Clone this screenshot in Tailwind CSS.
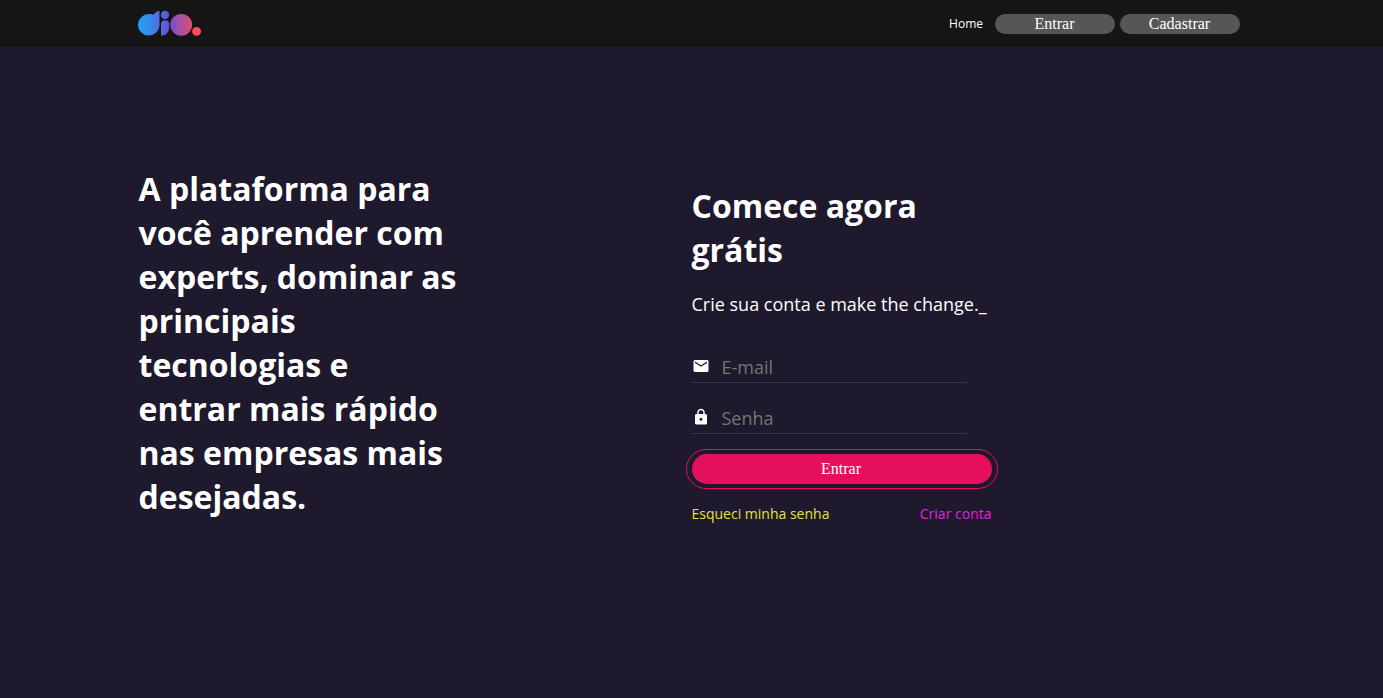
<!DOCTYPE html>
<html lang="pt-BR">
<head>
<meta charset="utf-8">
<title>DIO</title>
<script src="https://cdn.jsdelivr.net/npm/@tailwindcss/browser@4"></script>
</head>
<body class="bg-[#1e192c] text-white font-['Open_Sans',sans-serif] h-screen overflow-hidden">
<header class="h-[47px] bg-[#151515]">
  <div class="w-[1107px] ml-[138px] h-full flex items-center justify-between">
    <svg class="w-16 h-[26px] -mt-px" viewBox="0 -0.6 64 26">
      <defs>
        <linearGradient id="d" gradientUnits="userSpaceOnUse" x1="0" y1="0" x2="32" y2="0"><stop offset="0" stop-color="#1ba8f5"/><stop offset="1" stop-color="#6a4fd6"/></linearGradient>
        <linearGradient id="o" gradientUnits="userSpaceOnUse" x1="32" y1="0" x2="54" y2="0"><stop offset="0" stop-color="#7350d4"/><stop offset="1" stop-color="#e04e70"/></linearGradient>
      </defs>
      <path fill="url(#d)" d="M10.700 3.500C13 3.500 14.200 4 15.500 4C17.200 3 17.500.5 21.500.5V15A10.750 10.750 0 1 1 10.700 3.500Z"/>
      <circle fill="url(#d)" cx="27" cy="4.300" r="4.200"/>
      <path fill="url(#d)" d="M23 25.200V13a4.200 4.200 0 0 1 8.200 0V16.500C31.200 21.500 28 25.200 23 25.200Z"/>
      <circle fill="url(#o)" cx="43.200" cy="14.200" r="10.900"/>
      <circle fill="#ff4b5c" cx="58.600" cy="20.700" r="4.400"/>
    </svg>
    <nav class="flex items-center">
      <a class="text-xs mr-3">Home</a>
      <button class="w-[120px] h-5 rounded-full bg-[#565656] font-['Liberation_Serif',serif] text-base leading-5 mr-[5px] pr-px">Entrar</button>
      <button class="w-[120px] h-5 rounded-full bg-[#565656] font-['Liberation_Serif',serif] text-base leading-5 mr-[5px] pr-px">Cadastrar</button>
    </nav>
  </div>
</header>
<main class="flex pl-[138.500px] pt-[120px]">
  <h1 class="w-[320px] mr-[233px] text-[32px] leading-[44px] font-bold">A plataforma para você aprender com experts, dominar as principais tecnologias e entrar mais rápido nas empresas mais desejadas.</h1>
  <section class="w-[300px] pt-[17px]">
    <h2 class="w-[260px] text-[32px] leading-[44px] font-bold">Comece agora grátis</h2>
    <p class="mt-5 text-lg leading-[25px] whitespace-nowrap">Crie sua conta e make the change._</p>
    <form class="mt-[35px]">
      <label class="flex w-[275px] h-[31px] border-b border-[#3b3450]">
        <svg class="w-[18px] h-[18px] mt-[5px] mr-3" viewBox="0 0 24 24" fill="currentColor"><path d="M20 4H4c-1.100 0-2 .9-2 2v12c0 1.100.9 2 2 2h16c1.100 0 2-.9 2-2V6c0-1.100-.9-2-2-2zm0 4-8 5-8-5V6l8 5 8-5z"/></svg>
        <input class="w-[240px] h-[25px] mt-[2px] text-lg outline-none placeholder:text-[#757575]" placeholder="E-mail">
      </label>
      <label class="flex w-[275px] h-[31px] mt-5 border-b border-[#3b3450]">
        <svg class="w-[18px] h-[18px] mt-[5px] mr-3" viewBox="0 0 24 24" fill="currentColor"><path d="M18 8h-1V6c0-2.760-2.240-5-5-5S7 3.240 7 6v2H6c-1.100 0-2 .9-2 2v10c0 1.100.9 2 2 2h12c1.100 0 2-.9 2-2V10c0-1.100-.9-2-2-2zm-6 9a2 2 0 1 1 0-4 2 2 0 0 1 0 4zm3.100-9H8.900V6a3.100 3.100 0 0 1 6.200 0z"/></svg>
        <input class="w-[240px] h-[25px] mt-[2px] text-lg outline-none placeholder:text-[#757575]" placeholder="Senha">
      </label>
      <button type="button" class="block w-[312px] h-10 mt-[15px] -ml-[6px] px-[5px] py-1 border border-[#e4105d] rounded-[21px]"><span class="block h-full leading-[30px] pr-px rounded-full bg-[#e4105d] font-['Liberation_Serif',serif] text-base">Entrar</span></button>
    </form>
    <div class="flex justify-between mt-[15px] text-sm leading-5"><a class="text-[#e5e044]">Esqueci minha senha</a><a class="text-[#e023dd]">Criar conta</a></div>
  </section>
</main>
</body>
</html>
